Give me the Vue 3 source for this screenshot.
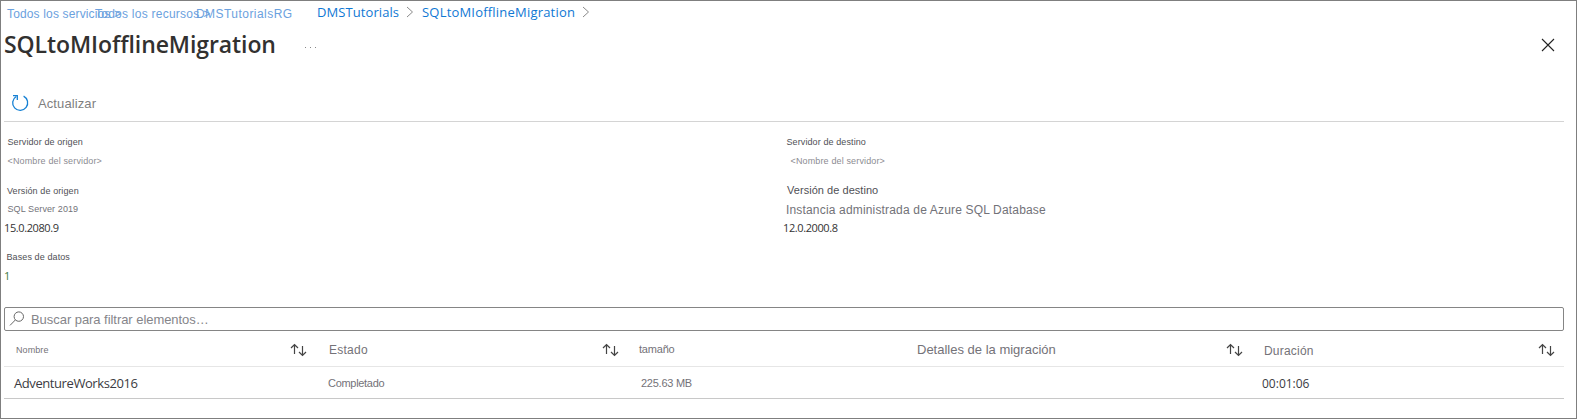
<script setup>
const columns = [
  { label: 'Nombre', cls: 'h-name', sortable: true },
  { label: 'Estado', cls: 'h-state', sortable: true },
  { label: 'tamaño', cls: 'h-size', sortable: false },
  { label: 'Detalles de la migración', cls: 'h-details', sortable: true },
  { label: 'Duración', cls: 'h-duration', sortable: true },
]
</script>

<template>
  <div class="blade">
    <nav class="crumbs">
      <a class="c1">Todos los servicios &gt;</a>
      <a class="c2">Todos los recursos &gt;</a>
      <a class="c3">DMSTutorialsRG</a>
      <a class="c4">DMSTutorials</a>
      <svg class="chev" width="8" height="12" viewBox="0 0 8 12"><path d="M1 1l5.5 5L1 11" /></svg>
      <a class="c5">SQLtoMIofflineMigration</a>
      <svg class="chev" width="8" height="12" viewBox="0 0 8 12"><path d="M1 1l5.5 5L1 11" /></svg>
    </nav>

    <header class="head">
      <h1>SQLtoMIofflineMigration</h1>
      <span class="more"><i></i><i></i><i></i></span>
      <svg class="close" width="14" height="14" viewBox="0 0 14 14"><path d="M1 1l12 12M13 1L1 13" /></svg>
    </header>

    <div class="toolbar">
      <svg class="refresh" width="18" height="18" viewBox="0 0 18 18">
        <path d="M12.6 2.2A7.5 7.5 0 1 1 5.2 2.5" />
        <path d="M2 1.7h4.3v4.4" />
      </svg>
      <span>Actualizar</span>
    </div>

    <section class="info">
      <dl>
        <dt class="l1">Servidor de origen</dt>
        <dd class="l2">&lt;Nombre del servidor&gt;</dd>
        <dt class="l3">Versión de origen</dt>
        <dd class="l4">SQL Server 2019</dd>
        <dd class="num">15.0.2080.9</dd>
        <dt class="l6">Bases de datos</dt>
        <dd class="num count">1</dd>
      </dl>
      <dl>
        <dt class="l1 dest">Servidor de destino</dt>
        <dd class="l2 indent">&lt;Nombre del servidor&gt;</dd>
        <dt class="l3 r3">Versión de destino</dt>
        <dd class="l4 r4">Instancia administrada de Azure SQL Database</dd>
        <dd class="num">12.0.2000.8</dd>
      </dl>
    </section>

    <div class="search">
      <svg width="16" height="16" viewBox="0 0 16 16">
        <circle cx="9.8" cy="5.6" r="4.7" />
        <path d="M6.3 9L1 14.4" />
      </svg>
      <span>Buscar para filtrar elementos…</span>
    </div>

    <div class="row header">
      <div v-for="c in columns" :key="c.label" class="cell">
        <span :class="c.cls">{{ c.label }}</span>
        <svg v-if="c.sortable" class="sort" width="17" height="14" viewBox="0 0 17 14">
          <path d="M4.5 11V1.5M1 5l3.5-3.5L8 5" />
          <path d="M12.5 3v9.5M9 9l3.5 3.5L16 9" />
        </svg>
      </div>
    </div>
    <div class="row data">
      <div class="cell"><span class="d-name">AdventureWorks2016</span></div>
      <div class="cell"><span class="d-state">Completado</span></div>
      <div class="cell"><span class="d-size">225.63 MB</span></div>
      <div class="cell"></div>
      <div class="cell"><span class="d-duration">00:01:06</span></div>
    </div>
  </div>
</template>

<style>
body { margin: 0; background: #fff; }
</style>

<style scoped>
.blade {
  box-sizing: border-box;
  width: 1577px;
  height: 419px;
  border: 1px solid #7f7f7f;
  background: #fff;
  font-family: "Liberation Sans", Arial, sans-serif;
  white-space: nowrap;
  overflow: hidden;
}
svg { fill: none; flex: none; display: block; }

.crumbs { display: flex; height: 26px; line-height: 26px; font-size: 12px; color: #6ba1de; }
.c1 { width: 88px; margin-left: 6px; letter-spacing: .15px; }
.c2 { width: 101px; letter-spacing: .25px; }
.c3 { width: 121px; letter-spacing: .45px; }
.c4, .c5 { font-family: "Open Sans", sans-serif; font-size: 13px; line-height: 23px; color: #0f78d4; }
.c4 { width: 89px; letter-spacing: .08px; }
.c5 { width: 160px; margin-left: 8px; letter-spacing: .2px; }
.chev { margin-top: 5px; stroke: #8a8a8a; }

.head { display: flex; height: 62px; }
h1 { margin: 0 0 0 3px; width: 301px; font: 600 23px/35px "Open Sans", sans-serif; letter-spacing: -.08px; color: #323130; }
.more { display: flex; gap: 4px; padding-top: 20px; }
.more i { width: 1px; height: 1px; background: #888; }
.close { margin: 11px 21px 0 auto; stroke: #222; stroke-width: 1.1; }

.toolbar { display: flex; width: 1560px; height: 32px; margin-left: 3px; border-bottom: 1px solid #d4d4d4; }
.refresh { margin: 5px 9px 0 7px; stroke: #1580d4; stroke-width: 1.3; }
.toolbar span { font-size: 13px; line-height: 29px; letter-spacing: .1px; color: #7f7f7f; }

.info { display: grid; grid-template-columns: 779px 1fr; height: 185px; }
dl { margin: 10px 0 0; }
dt, dd { margin: 0; padding-left: 6.5px; font-size: 9px; line-height: 20px; height: 20px; color: #505055; letter-spacing: .1px; }
dd.l2 { height: 30px; line-height: 18px; color: #8c8c92; letter-spacing: .14px; }
.l4 { height: 18px; line-height: 18px; color: #727278; }
dt.l3 { height: 18px; line-height: 19px; padding-left: 6px; }
.num { height: 28px; padding-left: 3px; font: 11px/20px "Open Sans", sans-serif; letter-spacing: -.4px; color: #333; }
dt.l6 { height: 20px; line-height: 22px; padding-left: 5.5px; }
.count { height: 20px; line-height: 20px; color: #3d7a3d; }
dd.indent { padding-left: 10.5px; }
dt.r3 { font-size: 11px; letter-spacing: .04px; line-height: 17px; padding-left: 7px; }
dd.r4 { font-size: 12px; letter-spacing: .17px; line-height: 20px; padding-left: 6px; }

.search { box-sizing: border-box; display: flex; width: 1560px; height: 24px; margin-left: 3px; border: 1px solid #858585; border-radius: 2px; }
.search svg { margin: 3px 6px 0 4px; stroke: #666; }
.search span { font-size: 13px; line-height: 23px; letter-spacing: -.05px; color: #85858a; }

.row { display: grid; grid-template-columns: 312px 312px 280px 344px 312px; width: 1560px; margin-left: 3px; }
.header { height: 35px; border-bottom: 1px solid #e6e6e6; }
.data { height: 31px; border-bottom: 1px solid #c8c8c8; }
.cell { display: flex; justify-content: space-between; padding: 0 9px 0 12px; color: #747278; }
.sort { margin-top: 12px; stroke: #444; stroke-width: 1.2; }
.h-name { font-size: 9px; line-height: 38px; letter-spacing: .08px; }
.h-state { font-size: 12px; line-height: 38px; letter-spacing: .25px; margin-left: 1px; }
.h-size { font-size: 11px; line-height: 37px; letter-spacing: -.2px; margin-left: -1px; }
.h-details { font-size: 13px; line-height: 38px; margin-left: -3px; }
.h-duration { font-size: 12px; line-height: 40px; letter-spacing: .2px; }
.d-name, .d-duration { font-family: "Open Sans", sans-serif; color: #3b3b42; line-height: 33px; margin-left: -2px; }
.d-name { font-size: 13px; letter-spacing: -.42px; }
.d-duration { font-size: 12px; }
.d-state { font-size: 11px; line-height: 32px; letter-spacing: -.3px; }
.d-size { font-size: 11px; line-height: 32px; letter-spacing: -.25px; margin-left: 1px; }
</style>
